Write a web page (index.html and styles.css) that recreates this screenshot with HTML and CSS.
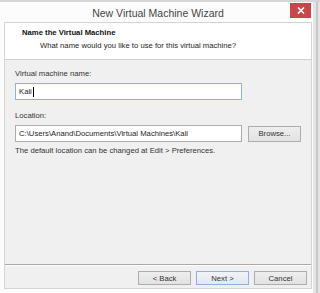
FILE: index.html
```html
<!DOCTYPE html>
<html>
<head>
<meta charset="utf-8">
<link rel="stylesheet" href="styles.css">
</head>
<body>
<div class="screen">
  <div class="topstrip"></div>
  <div class="row">
    <div class="window">
      <div class="titlebar">
        <span class="title">New Virtual Machine Wizard</span>
        <span class="close">
          <svg width="8" height="7" viewBox="0 0 8 7"><path d="M1 0.5 L7 6.5 M7 0.5 L1 6.5" stroke="#fff" stroke-width="1.6"/></svg>
        </span>
      </div>
      <div class="client">
        <div class="header">
          <div class="h-title">Name the Virtual Machine</div>
          <div class="h-sub">What name would you like to use for this virtual machine?</div>
        </div>
        <div class="body">
          <div class="label">Virtual machine name:</div>
          <div class="input focus">Kali<span class="caret"></span></div>
          <div class="label loc">Location:</div>
          <div class="loc-row">
            <div class="input path">C:\Users\Anand\Documents\Virtual Machines\Kali</div>
            <div class="btn browse">Browse...</div>
          </div>
          <div class="hint">The default location can be changed at Edit &gt; Preferences.</div>
        </div>
        <div class="footer">
          <div class="btn">&lt; Back</div>
          <div class="btn default">Next &gt;</div>
          <div class="btn">Cancel</div>
        </div>
      </div>
    </div>
    <div class="side">
      <div class="side-line"></div>
    </div>
  </div>
</div>
</body>
</html>
```
FILE: styles.css
```css
html, body {
  margin: 0;
  padding: 0;
}
body {
  width: 320px;
  height: 293px;
  overflow: hidden;
  font-family: "Liberation Sans", Arial, sans-serif;
  font-size: 7.7px;
  color: #1e1e1e;
  background: #e6e6e6;
}
.screen {
  display: flex;
  flex-direction: column;
  height: 293px;
}
.topstrip {
  height: 2px;
  background: #d6d6d6;
}
.row {
  display: flex;
  flex: 1;
}
.window {
  width: 313px;
  background: #fcfcfc;
  display: flex;
  flex-direction: column;
  padding: 0 1px 4px 4px;
  box-sizing: border-box;
}
.titlebar {
  height: 20px;
  position: relative;
  display: flex;
  justify-content: center;
  align-items: center;
}
.title {
  font-size: 10.5px;
  color: #444;
  margin-left: 0;
  margin-top: 2px;
}
.close {
  position: absolute;
  right: 1px;
  top: 1px;
  width: 21px;
  height: 15px;
  background: #c9474a;
  display: flex;
  align-items: center;
  justify-content: center;
}
.client {
  flex: 1;
  border: 1px solid #d4d4d4;
  background: #f0f0f0;
  display: flex;
  flex-direction: column;
}
.header {
  background: #ffffff;
  height: 37px;
  border-bottom: 1px solid #d0d0d0;
  box-sizing: border-box;
  padding: 5px 0 0 17px;
}
.h-title {
  font-weight: bold;
  color: #111;
  line-height: 10px;
}
.h-sub {
  padding-left: 18px;
  margin-top: 3px;
  line-height: 10px;
}
.body {
  flex: 1;
  padding: 9px 0 0 10px;
  border-bottom: 1px solid #a8a8a8;
}
.label {
  line-height: 10px;
  color: #333;
}
.label.loc {
  margin-top: 11px;
}
.input {
  margin-top: 4px;
  width: 227px;
  height: 17px;
  box-sizing: border-box;
  background: #fff;
  border: 1px solid #abadb3;
  padding: 0 0 0 3px;
  line-height: 15px;
  display: flex;
  align-items: center;
}
.input.focus {
  border-color: #8fb3dd;
}
.caret {
  width: 1px;
  height: 10px;
  background: #000;
  margin-left: 1px;
}
.loc-row {
  display: flex;
  align-items: center;
  gap: 6px;
  margin-top: 4px;
}
.loc-row .input {
  margin-top: 0;
}
.btn {
  width: 53px;
  height: 14px;
  box-sizing: border-box;
  border: 1px solid #adadad;
  background: linear-gradient(#eeeeee, #e2e2e2);
  display: flex;
  align-items: center;
  justify-content: center;
  color: #333;
}
.browse {
  height: 16px;
}
.btn.default {
  border-color: #8fb0e0;
  background: linear-gradient(#f0f3f8, #e4e8ef);
}
.hint {
  margin-top: 4px;
  line-height: 10px;
  color: #333;
}
.footer {
  height: 23px;
  box-sizing: border-box;
  border-top: 1px solid #ffffff;
  display: flex;
  justify-content: flex-end;
  gap: 5px;
  padding: 5px 4px 0 0;
}
.side {
  flex: 1;
  background: #e4e4e4;
  display: flex;
  justify-content: flex-end;
  padding-right: 2px;
}
.side-line {
  width: 2px;
  background: #c8c8c8;
}
```
